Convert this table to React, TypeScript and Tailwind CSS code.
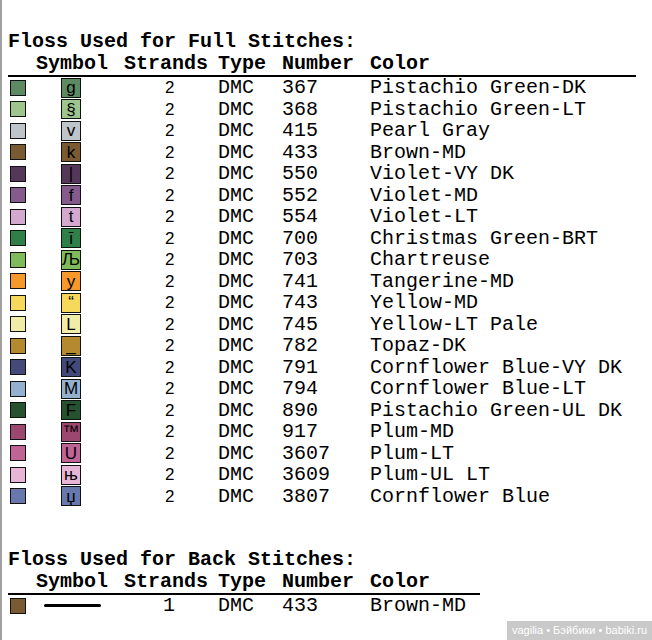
import React from "react";

type Row = { bg: string; sym: string; n: string; name: string };

const rows: Row[] = [
  { bg: "#5e8a63", sym: "g", n: "367", name: "Pistachio Green-DK" },
  { bg: "#9dc58d", sym: "§", n: "368", name: "Pistachio Green-LT" },
  { bg: "#bec4c9", sym: "v", n: "415", name: "Pearl Gray" },
  { bg: "#7a5a33", sym: "k", n: "433", name: "Brown-MD" },
  { bg: "#553759", sym: "|", n: "550", name: "Violet-VY DK" },
  { bg: "#855a8d", sym: "f", n: "552", name: "Violet-MD" },
  { bg: "#d4a9cf", sym: "t", n: "554", name: "Violet-LT" },
  { bg: "#2e7f48", sym: "ī", n: "700", name: "Christmas Green-BRT" },
  { bg: "#7fba5b", sym: "Љ", n: "703", name: "Chartreuse" },
  { bg: "#f7982b", sym: "y", n: "741", name: "Tangerine-MD" },
  { bg: "#f6d95b", sym: "“", n: "743", name: "Yellow-MD" },
  { bg: "#f1eca8", sym: "L", n: "745", name: "Yellow-LT Pale" },
  { bg: "#b58a2e", sym: "_", n: "782", name: "Topaz-DK" },
  { bg: "#434a7a", sym: "K", n: "791", name: "Cornflower Blue-VY DK" },
  { bg: "#94b0cf", sym: "M", n: "794", name: "Cornflower Blue-LT" },
  { bg: "#265230", sym: "F", n: "890", name: "Pistachio Green-UL DK" },
  { bg: "#9c476f", sym: "™", n: "917", name: "Plum-MD" },
  { bg: "#c06395", sym: "U", n: "3607", name: "Plum-LT" },
  { bg: "#e9b5d6", sym: "њ", n: "3609", name: "Plum-UL LT" },
  { bg: "#6878ad", sym: "џ", n: "3807", name: "Cornflower Blue" },
];

const mono = "font-['Liberation_Mono','Courier_New',monospace]";
const sans = "font-['Liberation_Sans',Arial,sans-serif]";
const cols = "grid grid-cols-[28px_88px_94px_64px_88px_1fr]";

function Title({ text }: { text: string }) {
  return (
    <div className={`${mono} font-bold text-[20px] leading-[22px] text-black whitespace-pre`}>
      {text}
    </div>
  );
}

function Header({ width }: { width: string }) {
  return (
    <div
      className={`${cols} ${mono} ${width} font-bold text-[20px] leading-[22px] h-[24px] border-b-2 border-black text-black whitespace-pre`}
    >
      <div />
      <div>Symbol</div>
      <div>Strands</div>
      <div>Type</div>
      <div>Number</div>
      <div>Color</div>
    </div>
  );
}

export default function App() {
  return (
    <div className="relative w-[652px] h-[640px] bg-white overflow-hidden">
      <div className="h-[640px] border-l-2 border-[#a0a0a0] pl-[6px] pt-[31px]">
        <Title text="Floss Used for Full Stitches:" />
        <Header width="w-[628px]" />
        <div className="flex flex-col">
          {rows.map((r) => (
            <div key={r.n} className={`${cols} h-[21.5px] items-center text-black`}>
              <div className="pl-[2px] flex items-center">
                <div className="w-[16px] h-[16px] border border-[#111]" style={{ backgroundColor: r.bg }} />
              </div>
              <div className="pl-[25px] flex items-center">
                <div
                  className={`w-[20px] h-[20px] border border-[#111] flex items-center justify-center ${sans} text-[17px] leading-none text-black`}
                  style={{ backgroundColor: r.bg }}
                >
                  {r.sym}
                </div>
              </div>
              <div className={`pl-[41px] ${sans} text-[17px] leading-[21.5px]`}>2</div>
              <div className={`${mono} text-[20px] leading-[21.5px]`}>DMC</div>
              <div className={`${mono} text-[20px] leading-[21.5px]`}>{r.n}</div>
              <div className={`${mono} text-[20px] leading-[21.5px] whitespace-pre`}>{r.name}</div>
            </div>
          ))}
        </div>

        <div className="mt-[42px]">
          <Title text="Floss Used for Back Stitches:" />
          <Header width="w-[472px]" />
          <div className={`${cols} h-[21.5px] items-center text-black`}>
            <div className="pl-[2px] flex items-center">
              <div className="w-[16px] h-[16px] border border-[#111] bg-[#7a5a33]" />
            </div>
            <div className="pl-[8px] flex items-center">
              <div className="w-[57px] h-[3px] rounded-full bg-black" />
            </div>
            <div className={`pl-[39px] ${mono} text-[20px] leading-[21.5px]`}>1</div>
            <div className={`${mono} text-[20px] leading-[21.5px]`}>DMC</div>
            <div className={`${mono} text-[20px] leading-[21.5px]`}>433</div>
            <div className={`${mono} text-[20px] leading-[21.5px]`}>Brown-MD</div>
          </div>
        </div>
      </div>

      <div
        className={`absolute right-0 bottom-0 w-[145px] h-[19px] bg-[#c9c9c9] text-white ${sans} text-[11px] leading-[19px] flex items-center justify-center whitespace-nowrap`}
      >
        vagilia • Бэйбики • babiki.ru
      </div>
    </div>
  );
}
